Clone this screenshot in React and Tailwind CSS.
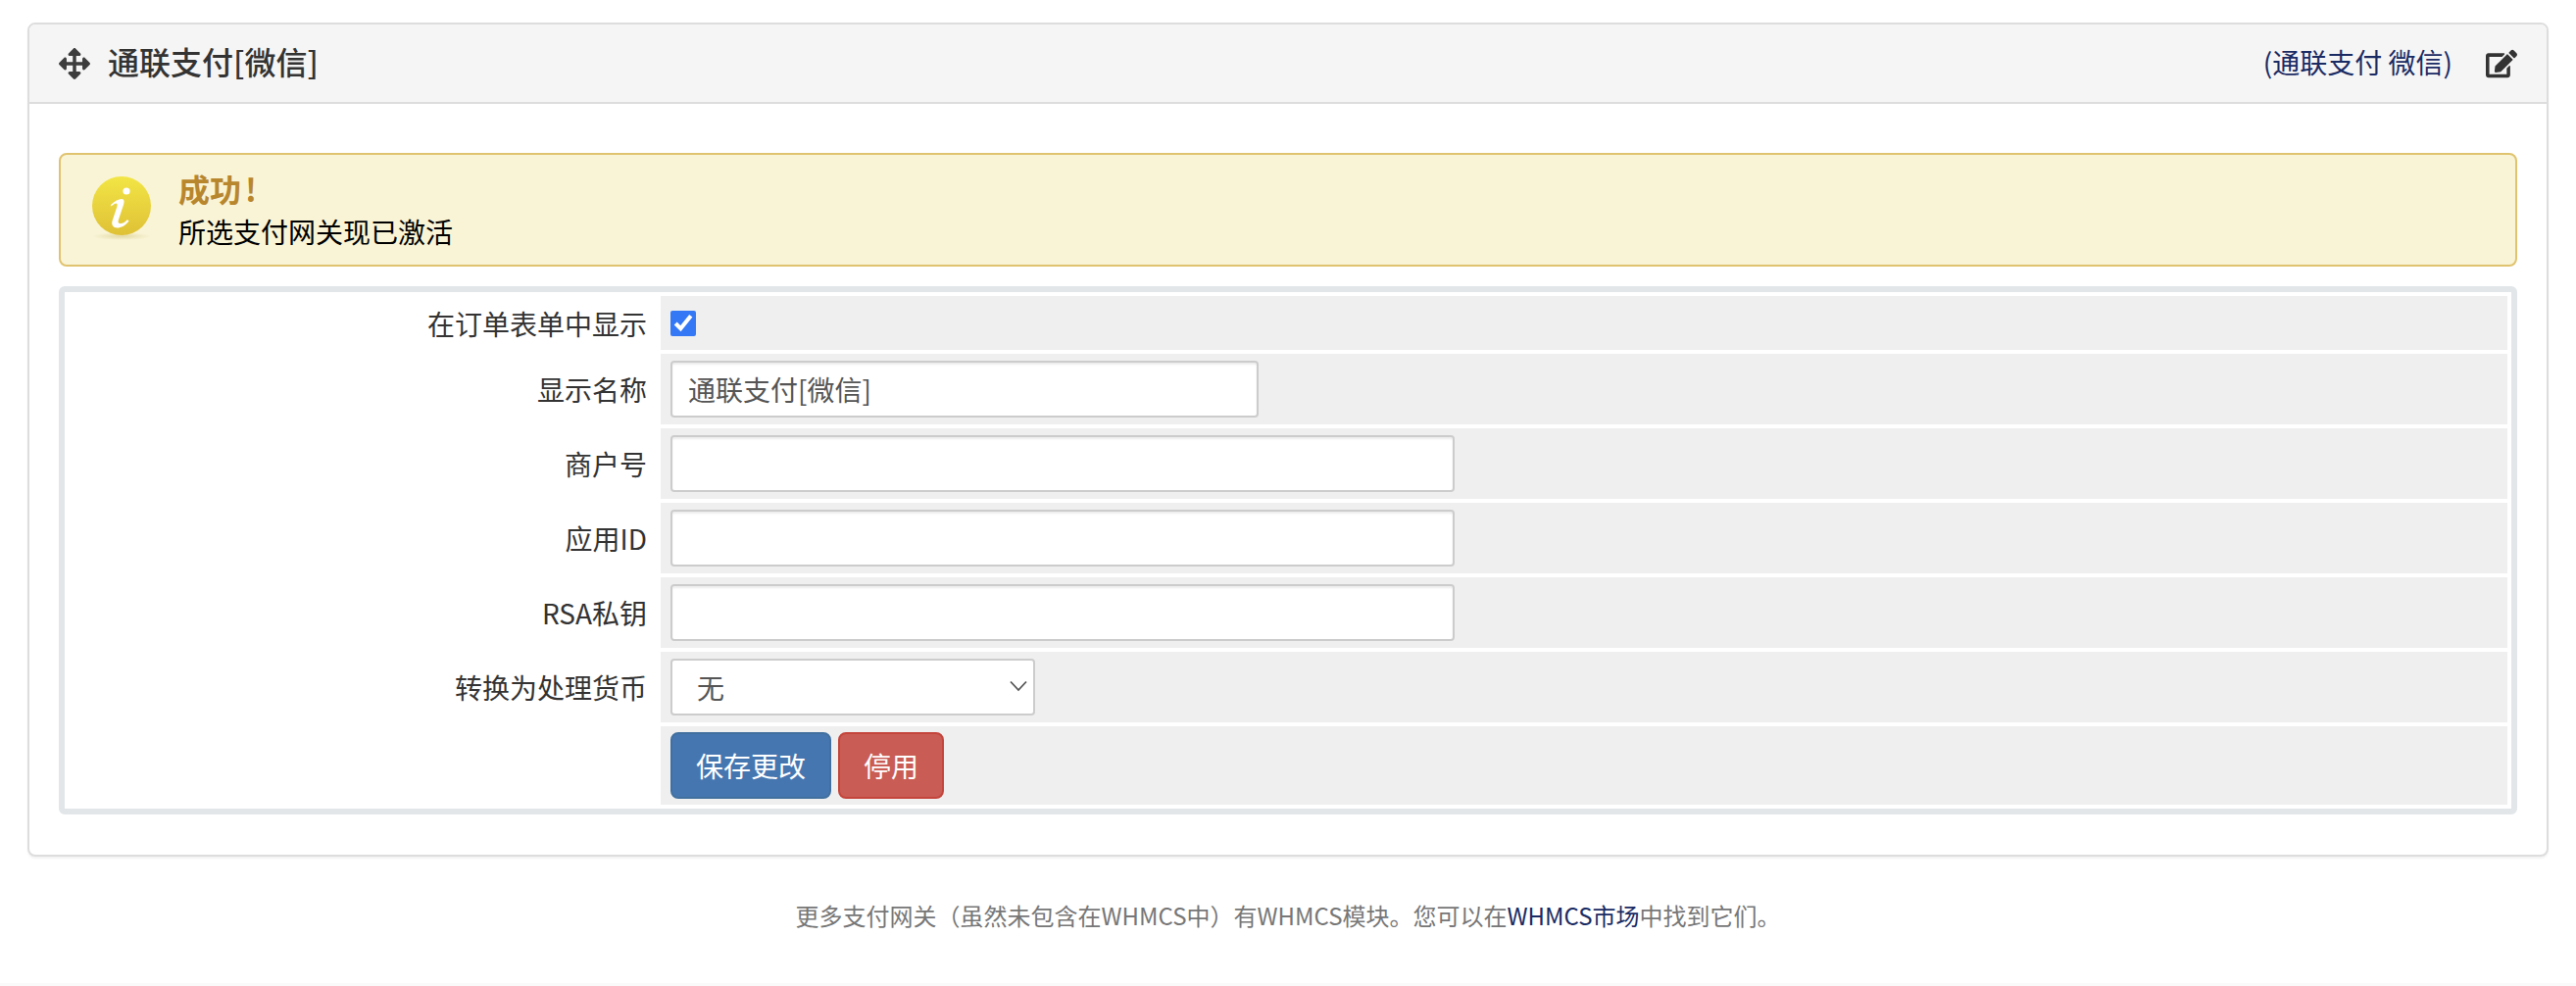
import React from "react";
import { FaArrowsAlt, FaEdit } from "react-icons/fa";

const font = "font-['Noto_Sans_CJK_SC','Liberation_Sans',sans-serif]";

const InfoIcon = () => (
  <svg width="64" height="68" viewBox="0 0 64 68">
    <defs>
      <linearGradient id="coin" x1="0" y1="0" x2="0" y2="1">
        <stop offset="0" stopColor="#f2e545" />
        <stop offset="1" stopColor="#dfc136" />
      </linearGradient>
      <radialGradient id="shade" cx="0.5" cy="0.5" r="0.5">
        <stop offset="0" stopColor="#b9a84a" stopOpacity="0.35" />
        <stop offset="1" stopColor="#b9a84a" stopOpacity="0" />
      </radialGradient>
    </defs>
    <ellipse cx="32" cy="61" rx="30" ry="4" fill="url(#shade)" />
    <circle cx="32" cy="30" r="30" fill="url(#coin)" />
    <circle cx="37" cy="15" r="3.6" fill="#fff" />
    <path d="M21 29c4-4 8-6 11-6 3 0 3 3 2 6l-5 15c-1 3 0 4 2 4 2 0 4-1 7-4l1.500 1.500c-4 5-8 7-12 7-4 0-6-3-5-7l5-15c.5-2 0-3-1-3-1 0-3 1-5 3z" fill="#fff" />
  </svg>
);

const Row = ({ label, children, rowClass = "h-[72px]" }) => (
  <tr className={rowClass}>
    <td className="w-[600px] pr-[10px] text-right text-[28px] leading-[40px] text-[#333]">{label}</td>
    <td className="bg-[#efefef] px-[10px] align-middle">{children}</td>
  </tr>
);

const TextInput = ({ width, value }) => (
  <input
    type="text"
    readOnly
    value={value}
    className={`block h-[58px] ${width} rounded-[4px] border-2 border-[#ccc] bg-white px-[16px] text-[28px] text-[#555] shadow-[inset_0_2px_2px_rgba(0,0,0,0.075)] outline-none`}
  />
);

export default function App() {
  return (
    <div className={`${font} flex h-screen flex-col bg-white pt-[23px] text-[#333]`}>
      <div className="mx-[28px] rounded-[8px] border-2 border-[#ddd] bg-white shadow-[0_2px_2px_rgba(0,0,0,0.05)]">
        <div className="flex h-[81px] items-center justify-between rounded-t-[6px] border-b-2 border-[#ddd] bg-[#f5f5f5] pl-[30px] pr-[30px]">
          <div className="flex items-center gap-[18px]">
            <FaArrowsAlt className="h-[32px] w-[32px] text-[#3d3d3d]" />
            <span className="-translate-y-[3px] text-[32px] font-medium leading-[44px] text-[#333]">通联支付[微信]</span>
          </div>
          <div className="flex items-center gap-[34px]">
            <a className="-translate-y-[2px] text-[28px] leading-[40px] text-[#1a2b63]">(通联支付 微信)</a>
            <FaEdit className="h-[32px] w-[32px] text-[#333]" />
          </div>
        </div>

        <div className="px-[30px] pb-[41px] pt-[50px]">
          <div className="flex h-[116px] items-center gap-[26px] rounded-[8px] border-2 border-[#e0c36f] bg-[#f9f4d6] pl-[30px]">
            <InfoIcon />
            <div>
              <div className="text-[32px] font-bold leading-[44px] text-[#b8862d]">成功<span className="ml-[4px]">!</span></div>
              <div className="text-[28px] leading-[44px] text-black">所选支付网关现已激活</div>
            </div>
          </div>

          <table className="mt-[20px] w-full border-separate border-spacing-[4px] rounded-[6px] border-[6px] border-[#e2e6e9] bg-white">
            <tbody>
              <Row label="在订单表单中显示" rowClass="h-[55px]">
                <input type="checkbox" readOnly checked className="block h-[26px] w-[26px] accent-[#3478f6]" />
              </Row>
              <Row label="显示名称">
                <TextInput width="w-[600px]" value="通联支付[微信]" />
              </Row>
              <Row label="商户号">
                <TextInput width="w-[800px]" value="" />
              </Row>
              <Row label="应用ID">
                <TextInput width="w-[800px]" value="" />
              </Row>
              <Row label="RSA私钥">
                <TextInput width="w-[800px]" value="" />
              </Row>
              <Row label="转换为处理货币">
                <div className="relative w-[372px]">
                  <select className="block h-[58px] w-full appearance-none rounded-[4px] border-2 border-[#ccc] bg-white pl-[25px] text-[28px] leading-[40px] text-[#555] outline-none">
                    <option>无</option>
                  </select>
                  <svg className="absolute right-[8px] top-[22px]" width="18" height="12" viewBox="0 0 18 12" fill="none" stroke="#555" strokeWidth="1.800">
                    <path d="M1 1.500l8 8.500 8-8.500" />
                  </svg>
                </div>
              </Row>
              <Row label="" rowClass="h-[80px]">
                <div className="flex gap-[7px]">
                  <button className="h-[68px] w-[164px] rounded-[8px] border-2 border-[#41709f] bg-[#4676b0] text-[28px] leading-[40px] text-white">保存更改</button>
                  <button className="h-[68px] w-[108px] rounded-[8px] border-2 border-[#c4453c] bg-[#c95c54] text-[28px] leading-[40px] text-white">停用</button>
                </div>
              </Row>
            </tbody>
          </table>
        </div>
      </div>

      <p className="mt-[42px] flex-1 text-center text-[24px] leading-[36px] text-[#777]">
        更多支付网关（虽然未包含在WHMCS中）有WHMCS模块。您可以在<a className="text-[#1a2b63]">WHMCS市场</a>中找到它们。
      </p>
      <div className="h-[3px] bg-[#fafafa]" />
    </div>
  );
}
